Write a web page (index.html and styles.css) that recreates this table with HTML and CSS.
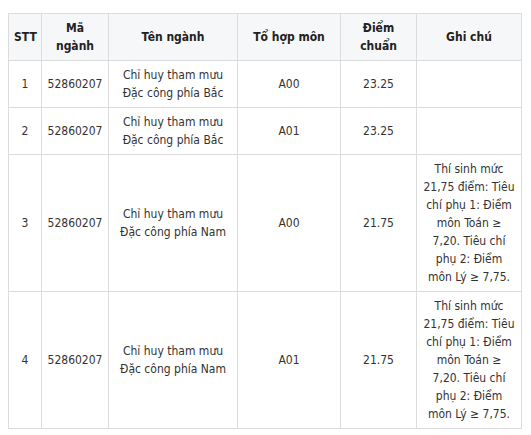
FILE: index.html
```html
<!DOCTYPE html>
<html lang="vi">
<head>
<meta charset="utf-8">
<link rel="stylesheet" href="styles.css">
</head>
<body>
<table class="scores">
  <colgroup>
    <col class="c-stt"><col class="c-ma"><col class="c-ten"><col class="c-to"><col class="c-diem"><col class="c-ghi">
  </colgroup>
  <thead>
    <tr>
      <th>STT</th>
      <th>Mã ngành</th>
      <th>Tên ngành</th>
      <th>Tổ hợp môn</th>
      <th>Điểm chuẩn</th>
      <th>Ghi chú</th>
    </tr>
  </thead>
  <tbody>
    <tr>
      <td>1</td>
      <td>52860207</td>
      <td>Chỉ huy tham mưu Đặc công phía Bắc</td>
      <td>A00</td>
      <td>23.25</td>
      <td class="note"></td>
    </tr>
    <tr>
      <td>2</td>
      <td>52860207</td>
      <td>Chỉ huy tham mưu Đặc công phía Bắc</td>
      <td>A01</td>
      <td>23.25</td>
      <td class="note"></td>
    </tr>
    <tr>
      <td>3</td>
      <td>52860207</td>
      <td>Chỉ huy tham mưu Đặc công phía Nam</td>
      <td>A00</td>
      <td>21.75</td>
      <td class="note">Thí sinh mức 21,75 điểm: Tiêu chí phụ 1: Điểm môn Toán ≥ 7,20. Tiêu chí phụ 2: Điểm môn Lý ≥ 7,75.</td>
    </tr>
    <tr>
      <td>4</td>
      <td>52860207</td>
      <td>Chỉ huy tham mưu Đặc công phía Nam</td>
      <td>A01</td>
      <td>21.75</td>
      <td class="note">Thí sinh mức 21,75 điểm: Tiêu chí phụ 1: Điểm môn Toán ≥ 7,20. Tiêu chí phụ 2: Điểm môn Lý ≥ 7,75.</td>
    </tr>
  </tbody>
</table>
</body>
</html>
```
FILE: styles.css
```css
html, body {
  margin: 0;
  background: #fff;
}
body {
  padding: 13px 11px 0 8px;
}
.scores {
  border-collapse: collapse;
  table-layout: fixed;
  width: 513px;
  font-family: "DejaVu Sans Condensed", "DejaVu Sans", sans-serif;
  font-stretch: condensed;
  font-size: 12px;
  line-height: 18px;
  color: #333;
}
.c-stt { width: 33px; }
.c-ma { width: 67px; }
.c-ten { width: 129px; }
.c-to { width: 103px; }
.c-diem { width: 76px; }
.c-ghi { width: 105px; }
.scores th,
.scores td {
  border: 1px solid #dcdcdc;
  padding: 5px 5px;
  text-align: center;
  vertical-align: middle;
}
.scores td.note {
  padding-left: 6px;
  padding-right: 6px;
}
.scores th {
  background: #f6f7f9;
  font-weight: bold;
  color: #222;
}
```
